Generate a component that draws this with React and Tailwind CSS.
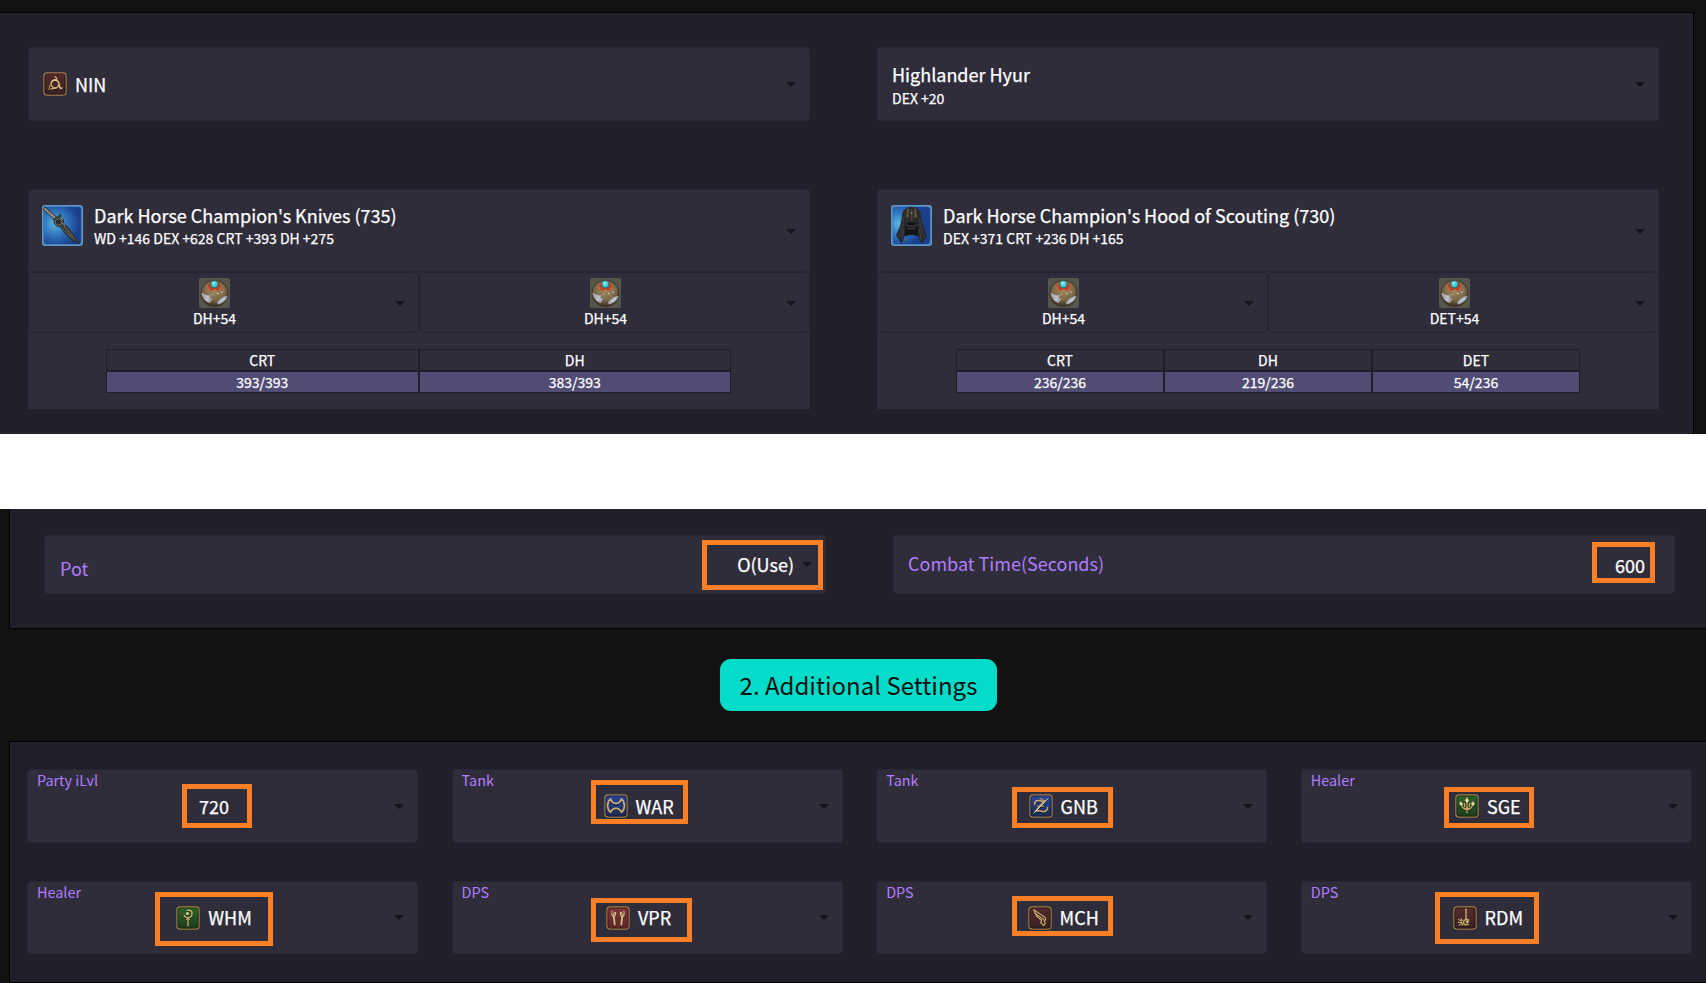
import React from "react";

const GOLD = "#c9ab6b";
const PALE = "#ecdcae";

const glyphs = {
  NIN: (
    <g fill="none" strokeLinecap="round">
      <circle cx="12" cy="12" r="3.900" stroke={GOLD} strokeWidth="1.600" />
      <path d="M8.200 11.500C8.400 8.200 11 7.800 13.400 7.600C14 6.600 13.400 5.400 12.200 4.800M15 9.400c1.800 2.400 1 5.200 2 6.600c.6.800 1.600.6 2-.2M13.800 15.600c-2.600 1.400-4.200.4-5.600 1.400" stroke={GOLD} strokeWidth="1.500" />
      <path d="M9 9.400c1.400-1.600 4-1.800 5.600.2M15.800 13c.2 1.400.8 2.600 1.600 3" stroke={PALE} strokeWidth="1" />
      <path d="M6 17.400c0-2 .4-3.600 1.600-5" stroke="#9a783f" strokeWidth="1.500" />
    </g>
  ),
  WAR: (
    <g fill="none" stroke={GOLD} strokeWidth="1.700" strokeLinejoin="round">
      <path d="M6.600 5C2.600 8 2.600 15.400 6.600 18.400C7.600 16.200 9.500 14.400 12 14.400S16.400 16.200 17.400 18.400C21.400 15.400 21.400 8 17.400 5C16.400 7.400 14.500 9.400 12 9.400S7.600 7.400 6.600 5Z" />
      <path d="M6.600 5.600c1.200 2.400 2.800 4 5.400 4s4.200-1.600 5.400-4" stroke={PALE} strokeWidth=".7" />
    </g>
  ),
  GNB: (
    <g fill="none" stroke={GOLD} strokeWidth="1.600" strokeLinecap="round" strokeLinejoin="round">
      <path d="M5.600 10.600C5.400 7 8.200 5.800 10.800 6.800c1.800.7 3.200.6 4.800-.2L6.400 17.400c2.600-1.400 4.800-.6 6.600 0c2.800.8 5.400-.6 5.600-3.800" />
      <path d="M18.800 4.800L5 19" stroke={PALE} strokeWidth="1" />
      <path d="M11 4.400l3.400 2M8.600 12.200h6" strokeWidth="1.100" />
    </g>
  ),
  SGE: (
    <g fill={PALE} stroke={GOLD} strokeLinecap="round">
      <path d="M12 6v13M6.600 10.600c.2 3 2.400 4.600 5.400 4.800c3-.2 5.200-1.800 5.400-4.800M9.600 9.600v3.200M14.400 9.600v3.200" fill="none" strokeWidth="1.200" />
      <path d="M12 3.600l2 3.200l-2 2.200l-2-2.200ZM6 7.600l2 2.400l-1.800 2l-1.800-2.200ZM18 7.600l1.800 2.200l-1.800 2.200l-2-2Z" strokeWidth=".5" />
      <circle cx="12" cy="14.600" r="1.300" fill={GOLD} strokeWidth=".5" />
    </g>
  ),
  WHM: (
    <g fill="none" stroke={GOLD} strokeLinecap="round">
      <path d="M12 12.400V20" strokeWidth="1.400" />
      <path d="M11.400 4.400c3-.8 4.800 1 4.600 3.600c-.2 2.600-2.200 4-4.200 3.800c-2-.1-3.200-1-3.600-2.400" strokeWidth="1.500" />
      <circle cx="11.400" cy="7.600" r="1.400" fill={PALE} strokeWidth=".6" />
      <path d="M10.400 13.600l1.600-1.200l1.600 1.200" strokeWidth="1" />
    </g>
  ),
  VPR: (
    <g fill="none" stroke="#d3bd84" strokeLinecap="round" strokeLinejoin="round">
      <path d="M6.200 5.400c-.9 2.600-.1 4.600 1.500 6c1.800-1.400 2.300-3 1.800-5c-1.400.3-2 1.300-2 2.800M17.800 5.400c.9 2.600.1 4.600-1.500 6c-1.800-1.400-2.300-3-1.800-5c1.400.3 2 1.300 2 2.800" strokeWidth="1.200" />
      <path d="M7.900 11.400l.8 7.200M16.100 11.400l-.8 7.200" strokeWidth="1.900" />
    </g>
  ),
  MCH: (
    <g fill="none" stroke={GOLD} strokeLinecap="round" strokeLinejoin="round">
      <path d="M6 4L17 11.600M7 7.400L15.600 13.400M8.800 10.400l4.600 3.800" strokeWidth="1.200" />
      <path d="M6 4l2.800 6.400M17 11.600c1.200 1.600.6 2.800-1 3.400l1.200 2.600l-1.600 2l-2-2.200M13.400 14.200l-.6 3" strokeWidth="1.300" />
    </g>
  ),
  RDM: (
    <g fill="none" stroke={GOLD} strokeLinecap="round">
      <path d="M13 3.200V14" strokeWidth="1.500" />
      <path d="M15.800 14.200c-2-1.400-5-.6-5.400 1.800c-.3 2.200 2.200 3.600 4.800 2.400" strokeWidth="1.500" />
      <circle cx="14.200" cy="16" r="1.200" fill={PALE} strokeWidth=".4" />
      <path d="M5.600 13.400l3 1.600M5.200 16.400h3.400M6 19.200l2.800-1.800M8.200 12.600l1 1.600M9 19.600l.6-1.600" strokeWidth="1.100" />
    </g>
  ),
};

const tones = {
  red: ["#562a2d", "#362125"],
  bright: ["#7e3334", "#5e2528"],
  blue: ["#2b479c", "#1a2a52"],
  green: ["#2c6328", "#1d3a20"],
};

function JobIcon({ job, tone }) {
  const id = "job-" + job;
  return (
    <svg viewBox="0 0 24 24" className="h-6 w-6 shrink-0">
      <defs>
        <linearGradient id={id} x1="0" y1="0" x2="0" y2="1">
          <stop offset="0" stopColor={tones[tone][0]} />
          <stop offset="1" stopColor={tones[tone][1]} />
        </linearGradient>
      </defs>
      <rect x=".3" y=".8" width="23.400" height="23" rx="3.600" fill="#1b191f" />
      <rect x=".9" y=".9" width="22.200" height="22.200" rx="3.200" fill={"url(#" + id + ")"} stroke="#a3824c" strokeWidth="1.200" />
      <rect x="1.900" y="1.900" width="20.200" height="20.200" rx="2.400" fill="none" stroke="#000" strokeOpacity=".4" strokeWidth="1" />
      <g transform="translate(0 .9)" opacity=".5" className="brightness-0">{glyphs[job]}</g>
      {glyphs[job]}
    </svg>
  );
}

function GearFrame({ id, children, cx }) {
  return (
    <svg viewBox="0 0 41 41" className="h-[41px] w-[41px] shrink-0">
      <defs>
        <radialGradient id={id} cx={cx} cy=".45" r=".65">
          <stop offset="0" stopColor="#5db4de" />
          <stop offset=".5" stopColor="#2f74bd" />
          <stop offset="1" stopColor="#1c3f8c" />
        </radialGradient>
      </defs>
      <rect width="41" height="41" rx="3" fill="#6497c4" />
      <rect x="1" y="1" width="39" height="39" rx="3" fill="#4180bd" />
      <rect x="2" y="2" width="37" height="37" rx="3" fill={"url(#" + id + ")"} />
      {children}
    </svg>
  );
}

function KnifeIcon() {
  return (
    <GearFrame id="gear-knife" cx=".3">
      <path d="M1 4l2-2L14.500 12l-2.500 2.500Z" fill="#77766d" stroke="#2c2d2c" strokeWidth=".8" />
      <path d="M2.500 3.500L13 13" stroke="#b5b2a4" strokeWidth=".8" />
      <path d="M12 14l4-2.500l2.500-2.500l.5 4l2.500 1.500l0 3.500l4.500 4.500l5 6.500l6.500 9.500l-6.500-2.500l-8.500-8l-4-6l-4-1l-2.500-3Z" fill="#393d38" stroke="#20262b" strokeWidth=".8" />
      <circle cx="16.500" cy="17" r="3.300" fill="#282d2c" stroke="#77786a" strokeWidth=".9" />
      <path d="M22 21l11 13.500M20.500 24l9 8.500" stroke="#88897c" strokeWidth=".9" strokeDasharray="2 1" />
      <path d="M18 12l3 3M20 18l3 2" stroke="#9b9a88" strokeWidth=".9" />
    </GearFrame>
  );
}

function HoodIcon() {
  return (
    <GearFrame id="gear-hood" cx=".15">
      <path d="M11 10C12 4.500 16 1.800 20.500 1.800S29 4.500 30 10C30.500 17 33 24 36 31C34.500 34 32.500 35 31.500 39C29.500 37 28 34 27.500 31C24 29.500 17 29.500 13.500 31C13 34 11.500 37 10.500 39C9 35 6.500 34 5 30C8.500 24 10.500 17 11 10Z" fill="#292a2d" />
      <path d="M14.500 19c3-2.500 9-2.500 12 0l.5 7l.5 5c-3.500-1.500-10.500-1.500-14 0l.5-5Z" fill="#131417" />
      <path d="M14.500 19.500c3 2.500 9 2.500 12 0M16.500 23c2.500 1 5.500 1 8 0" stroke="#3c3d40" strokeWidth="1.100" fill="none" />
      <path d="M16 4L14.500 13h3.500L18 2.500ZM25 4L26.500 13H23V2.500Z" fill="#4f4430" />
      <path d="M16.500 5v7M24.500 5v7" stroke="#7d683e" strokeWidth=".9" strokeDasharray="1.500 1" />
      <path d="M20.500 4v12" stroke="#42423d" strokeWidth="2" />
      <circle cx="20.500" cy="8" r="1" fill="#77756c" />
      <path d="M12.500 13C12 20 10 27 8 32M28.500 13C29 20 31 27 33 32M12.500 24l-1 11M28.500 24l1.500 11" stroke="#3f4045" strokeWidth="1" fill="none" />
    </GearFrame>
  );
}

function MateriaIcon() {
  return (
    <svg viewBox="0 0 31 30" className="h-[30px] w-[31px] shrink-0">
      <defs>
        <radialGradient id="materia-bg"><stop offset=".5" stopColor="#37382f" /><stop offset="1" stopColor="#57564c" /></radialGradient>
        <radialGradient id="materia-orb" cx=".5" cy=".35" r=".65"><stop offset="0" stopColor="#a58c61" /><stop offset=".6" stopColor="#7d6849" /><stop offset="1" stopColor="#372e22" /></radialGradient>
      </defs>
      <rect width="31" height="30" rx="2" fill="url(#materia-bg)" />
      <ellipse cx="15.500" cy="15.500" rx="13.500" ry="13" fill="url(#materia-orb)" stroke="#302a20" strokeWidth=".6" />
      <path d="M2.500 14.500c3.500 2.500 6 3 9.500 2.500l-1.500 3l3 .5l-3 4.500C6 23.500 3 19.500 2.500 14.500ZM28.500 18c-3-.5-8 2.500-10.500 6.500l1 2c4.500-1.200 8.500-4 9.500-8.500Z" fill="#a9abb6" />
      <path d="M7 18l3 2M6 21l3 1M21 24l5-4" stroke="#dcdee6" strokeWidth="1" />
      <path d="M9 7c0 4 2.500 6 5 5.500l1.500-1.500l2 1.500c2.500 0 4.500-2 4-5.500l-3-4h-6Z" fill="#c93a1f" />
      <path d="M8.500 8.500l2 3M22 9l-2 3" stroke="#e2573b" strokeWidth="1.200" />
      <circle cx="15.300" cy="6.500" r="4" fill="#1e7f86" />
      <circle cx="15.300" cy="6" r="3" fill="#4fd0d6" />
      <circle cx="14.600" cy="5.200" r="1" fill="#c9f7f5" />
      <path d="M13 16.500h1M18 15.500h1.500M22.500 15l1-1.500" stroke="#e0d6bd" strokeWidth="1.100" />
    </svg>
  );
}

function Caret({ className = "" }) {
  return (
    <svg viewBox="0 0 10 5" className={"h-[5px] w-[10px] shrink-0 " + className}>
      <path d="M0 0h10L5 5z" fill="#151419" />
    </svg>
  );
}

function Mark({ className }) {
  return <div className={"pointer-events-none absolute border-[5px] border-[#ff7f27] " + className} />;
}

function Materia({ label }) {
  return (
    <div className="flex h-[61px] flex-1 items-center rounded-[4px] border border-[#252430] pr-[13px]">
      <div className="flex flex-1 flex-col items-center pl-[5px]">
        <MateriaIcon />
        <div className="text-[14px] leading-[20px]">{label}</div>
      </div>
      <Caret className="mt-[2px]" />
    </div>
  );
}

function Gear({ icon, name, stats, materia, table, tableClass }) {
  return (
    <div className="flex h-[220px] w-[782px] flex-col rounded-t-[4px] bg-[#2f2d3a]">
      <div className="flex h-[83px] items-start rounded-[4px] border border-[#292733] pr-[13px] pl-[13px]">
        <div className="flex flex-1 items-start pt-[15px]">
          {icon}
          <div className="-mt-[3px] ml-[11px]">
            <div className="text-[18px] leading-[27px]">{name}</div>
            <div className="text-[14px] leading-[18px]">{stats}</div>
          </div>
        </div>
        <Caret className="mt-[39px]" />
      </div>
      <div className="flex">
        {materia.map((m, i) => <Materia key={i} label={m} />)}
      </div>
      <div className={"mt-4 flex " + tableClass}>
        {table.map(([k, v]) => (
          <div key={k} className="flex-1 text-center text-[14px]">
            <div className="h-[22px] border border-[#201f28] leading-[21px]">{k}</div>
            <div className="h-[22px] border border-[#201f28] bg-[#514c74] leading-[21px]">{v}</div>
          </div>
        ))}
      </div>
    </div>
  );
}

function Slot({ label, value, tone, mark }) {
  return (
    <div className="relative flex items-center rounded-[4px] border border-[#292733] bg-[#2f2d3a] pr-[13px]">
      <div className="absolute -top-px left-[9px] text-[14.400px] leading-[22px] text-[#b27cff] [-webkit-text-stroke:0]">{label}</div>
      <div className="flex flex-1 items-center justify-center gap-[8px] pl-[6px]">
        {tone && <JobIcon job={value} tone={tone} />}
        <span className="-mt-px text-[18px] leading-[28px]">{value}</span>
      </div>
      <Caret />
      <Mark className={mark} />
    </div>
  );
}

const party = [
  { label: "Party iLvl", value: "720", mark: "left-[154px] top-[14px] w-[70px] h-[44px]" },
  { label: "Tank", value: "WAR", tone: "blue", mark: "left-[138px] top-[10px] w-[97px] h-[44px]" },
  { label: "Tank", value: "GNB", tone: "blue", mark: "left-[135px] top-[17px] w-[101px] h-[41px]" },
  { label: "Healer", value: "SGE", tone: "green", mark: "left-[142px] top-[17px] w-[90px] h-[41px]" },
  { label: "Healer", value: "WHM", tone: "green", mark: "left-[127px] top-[10px] w-[118px] h-[54px]" },
  { label: "DPS", value: "VPR", tone: "bright", mark: "left-[138px] top-[16px] w-[101px] h-[44px]" },
  { label: "DPS", value: "MCH", tone: "red", mark: "left-[135px] top-[14px] w-[101px] h-[40px]" },
  { label: "DPS", value: "RDM", tone: "red", mark: "left-[133px] top-[10px] w-[104px] h-[52px]" },
];

export default function App() {
  return (
    <div className="flex h-[983px] w-[1706px] flex-col overflow-hidden bg-white font-['Noto_Sans_CJK_KR','Noto_Sans_CJK_JP',sans-serif] text-white [-webkit-text-stroke:0.25px]">
      <section className="h-[434px] bg-[#121212] pt-3 pr-3">
        <div className="h-full border-t border-r border-black bg-[#211f29] pt-[34px] pl-7">
          <div className="flex gap-[67px]">
            <div className="flex h-[74px] w-[782px] items-center rounded-[4px] border border-[#292733] bg-[#2f2d3a] pr-[13px] pl-[14px]">
              <JobIcon job="NIN" tone="red" />
              <span className="ml-[8px] flex-1 text-[18px] leading-[28px]">NIN</span>
              <Caret />
            </div>
            <div className="flex h-[74px] w-[782px] items-center rounded-[4px] border border-[#292733] bg-[#2f2d3a] pr-[13px] pl-[14px]">
              <div className="flex-1">
                <div className="text-[18px] leading-[27px]">Highlander Hyur</div>
                <div className="text-[14px] leading-[20px]">DEX +20</div>
              </div>
              <Caret />
            </div>
          </div>
          <div className="mt-[68px] flex gap-[67px]">
            <Gear icon={<KnifeIcon />} name="Dark Horse Champion's Knives (735)" stats="WD +146 DEX +628 CRT +393 DH +275" materia={["DH+54", "DH+54"]} table={[["CRT", "393/393"], ["DH", "383/393"]]} tableClass="ml-[78px] w-[625px]" />
            <Gear icon={<HoodIcon />} name="Dark Horse Champion's Hood of Scouting (730)" stats="DEX +371 CRT +236 DH +165" materia={["DH+54", "DET+54"]} table={[["CRT", "236/236"], ["DH", "219/236"], ["DET", "54/236"]]} tableClass="ml-[79px] w-[624px]" />
          </div>
        </div>
      </section>

      <section className="mt-[75px] flex h-[474px] flex-col bg-[#121212] pl-[9px]">
        <div className="flex h-[120px] gap-[67px] border-b border-l border-black bg-[#211f29] pt-[26px] pl-[34px]">
          <div className="relative flex h-[59px] w-[782px] items-center rounded-[4px] border border-[#292733] bg-[#2f2d3a] pr-[13px] pl-[15px] text-[18px] leading-[28px]">
            <span className="mt-[7px] flex-1 text-[#b27cff] [-webkit-text-stroke:0]">Pot</span>
            <span className="-mt-px mr-[8px]">O(Use)</span>
            <Caret />
            <Mark className="top-[4px] left-[657px] h-[50px] w-[121px]" />
          </div>
          <div className="relative flex h-[59px] w-[782px] items-center rounded-[4px] border border-[#292733] bg-[#2f2d3a] pr-[29px] pl-[14px] text-[18px] leading-[28px]">
            <span className="-mt-[3px] flex-1 text-[#b27cff] [-webkit-text-stroke:0]">Combat Time(Seconds)</span>
            <span>600</span>
            <Mark className="top-[6px] left-[698px] h-[41px] w-[63px]" />
          </div>
        </div>
        <div className="flex h-[112px] items-start justify-center pt-[30px]">
          <div className="ml-[2px] flex h-[52px] w-[277px] items-center justify-center rounded-[11px] bg-[#03dcc8] text-[24px] text-[#08100f] [-webkit-text-stroke:0]">2. Additional Settings</div>
        </div>
        <div className="grid h-[242px] grid-cols-[repeat(4,391px)] grid-rows-[74px_73px] content-start gap-x-[33.600px] gap-y-[38px] border-y border-l border-black bg-[#211f29] pt-[27px] pl-[17px]">
          {party.map((p, i) => <Slot key={i} {...p} />)}
        </div>
      </section>
    </div>
  );
}
